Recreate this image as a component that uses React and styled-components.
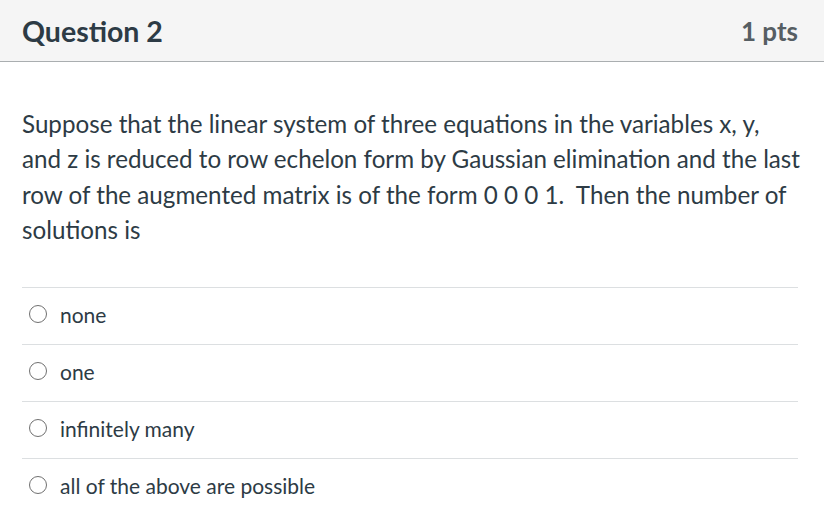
import React from 'react';
import styled, {createGlobalStyle} from "styled-components";

const GlobalStyle = createGlobalStyle`
    body {
        margin: 0;
        background: #fff;
        font-family: Lato, "Noto Sans", sans-serif;
        color: #2d3b45;
    }
`;

const answers = [
    "none",
    "one",
    "infinitely many",
    "all of the above are possible",
];

const App = () => {
    return (
        <>
            <GlobalStyle />
            <StyledQuestion>
                <StyledHeader>
                    <StyledTitle>Question 2</StyledTitle>
                    <StyledPoints>1 pts</StyledPoints>
                </StyledHeader>
                <StyledBody>
                    <StyledText>
                        Suppose that the linear system of three equations in the variables x, y,<br />
                        and z is reduced to row echelon form by Gaussian elimination and the last<br />
                        row of the augmented matrix is of the form 0 0 0 1.&nbsp; Then the number of<br />
                        solutions is
                    </StyledText>
                    <StyledAnswers>
                        {answers.map((answer, index) => (
                            <StyledAnswer key={index}>
                                <StyledRadio type="radio" name="q2" />
                                <StyledLabel>{answer}</StyledLabel>
                            </StyledAnswer>
                        ))}
                    </StyledAnswers>
                </StyledBody>
            </StyledQuestion>
        </>
    );
};

export default App;


const StyledQuestion = styled.div`
    width: 824px;
`;

const StyledHeader = styled.div`
    display: flex;
    justify-content: space-between;
    align-items: center;
    height: 61px;
    padding: 0 26px 0 22px;
    background: #f5f5f5;
    border-bottom: 1px solid #aaaeb0;
`;

const StyledTitle = styled.h2`
    margin: 0;
    font-size: 28.5px;
    font-weight: 700;
    color: #2d3b45;
`;

const StyledPoints = styled.div`
    font-size: 26px;
    font-weight: 700;
    color: #565e63;
`;

const StyledBody = styled.div`
    padding: 0 26px 0 22px;
`;

const StyledText = styled.p`
    margin: 44px -20px 40px 0;
    font-size: 24.2px;
    line-height: 35.3px;
    white-space: nowrap;
`;

const StyledAnswers = styled.div`
    display: flex;
    flex-direction: column;
`;

const StyledAnswer = styled.label`
    display: flex;
    align-items: center;
    height: 52px;
    padding-bottom: 4px;
    border-top: 1px solid #dcdfe1;
`;

const StyledRadio = styled.input`
    appearance: none;
    flex: none;
    width: 18px;
    height: 18px;
    margin: 0 13px 0 7px;
    border: 1.5px solid #707070;
    border-radius: 50%;
    background: #fff;
`;

const StyledLabel = styled.span`
    font-size: 21px;
    color: #2d3b45;
`;
